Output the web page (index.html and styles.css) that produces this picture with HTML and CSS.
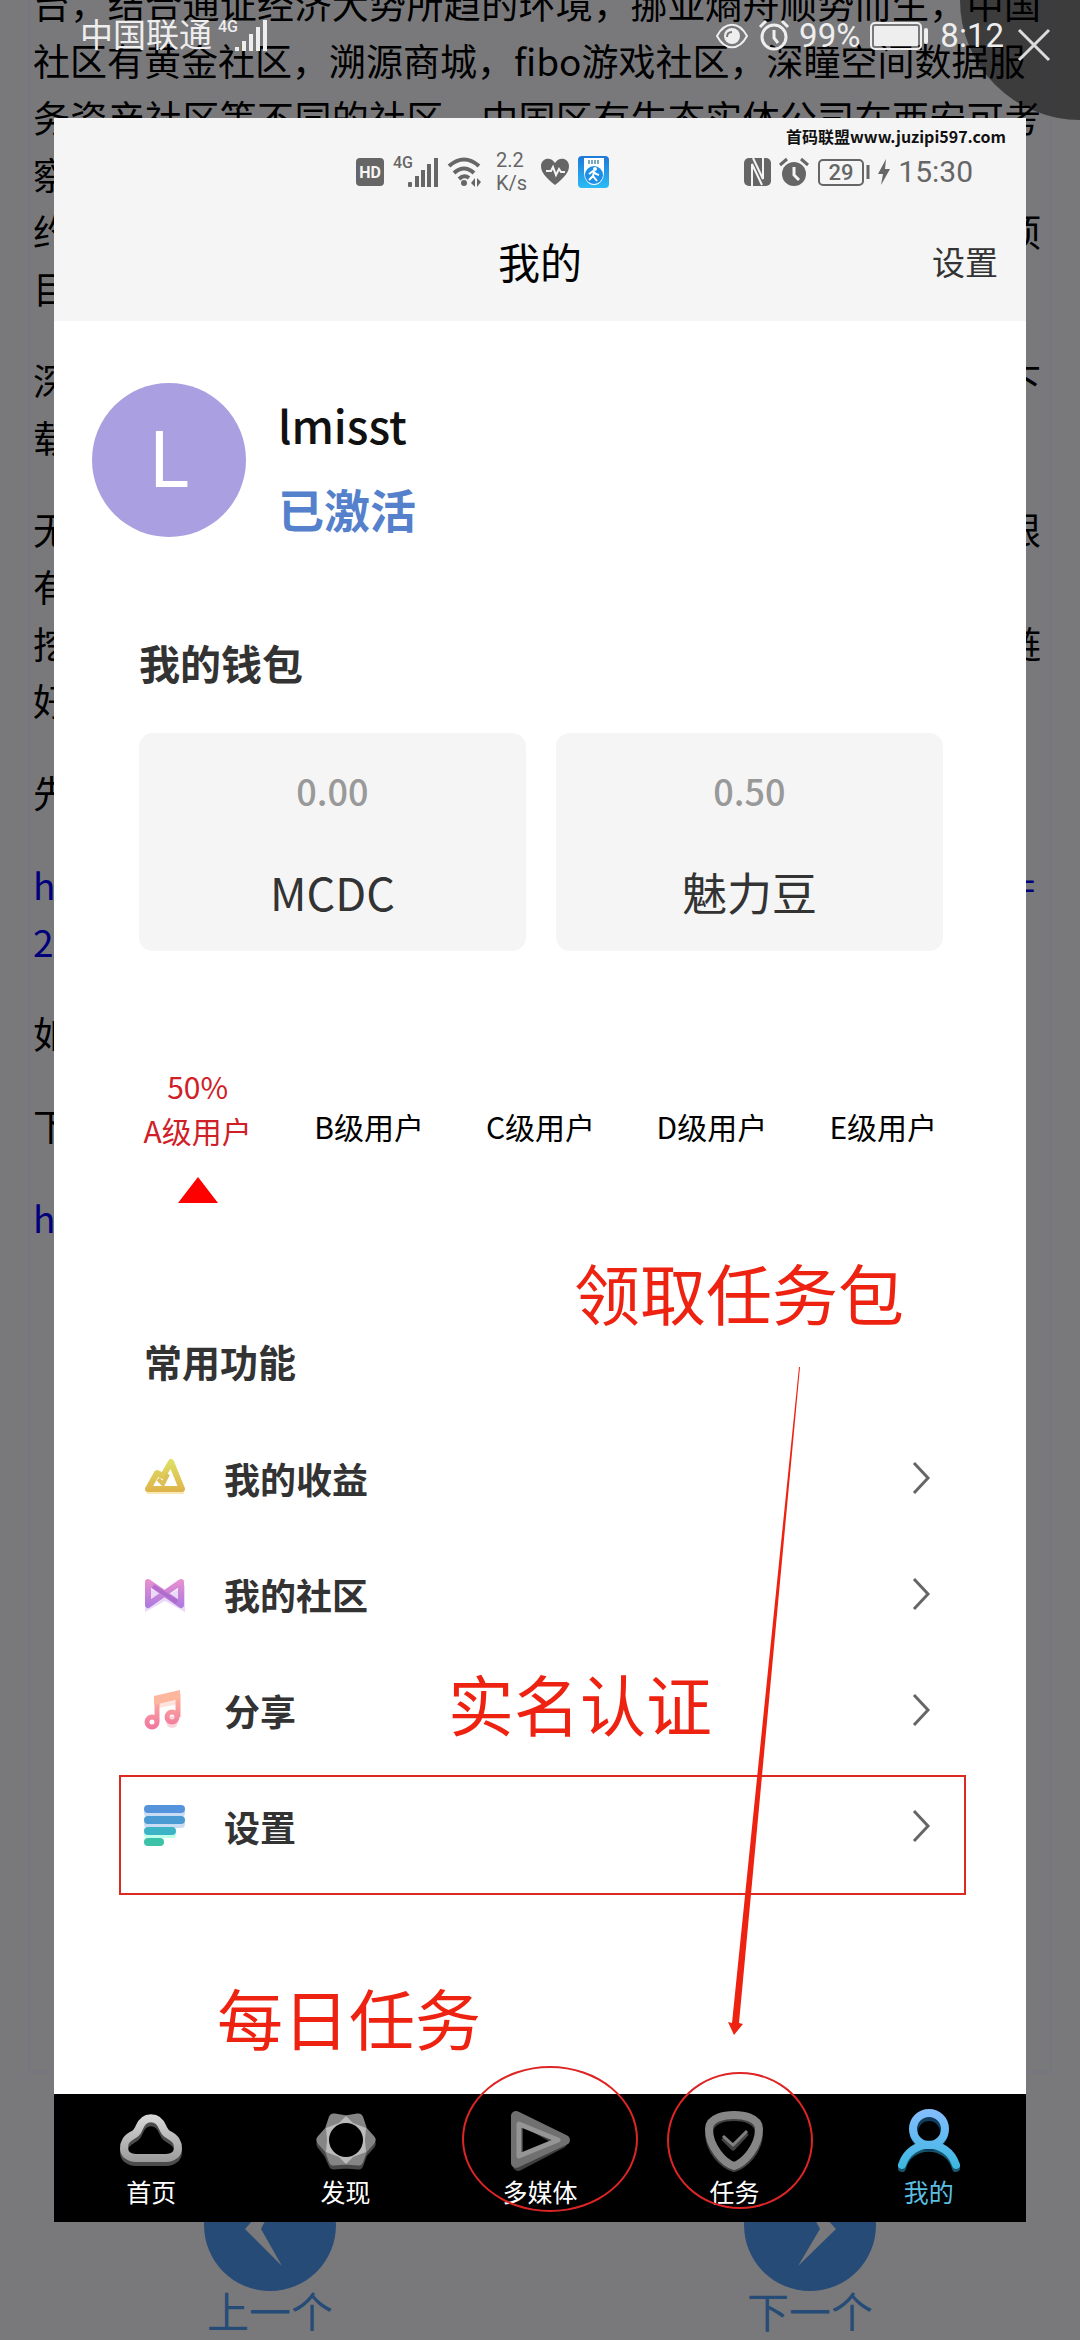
FILE: index.html
```html
<!DOCTYPE html>
<html lang="zh-CN">
<head>
<meta charset="utf-8">
<meta name="viewport" content="width=device-width, initial-scale=1">
<title>我的</title>
<link rel="stylesheet" href="styles.css">
</head>
<body>
<div class="stage">

  <div class="page">
    <article class="article">
      <p><span class="full">台，结合通证经济大势所趋的环境，挪亚熵舟顺势而生，中国</span>社区有黄金社区，溯源商城，fibo游戏社区，深瞳空间数据服<span class="full">务资产社区等不同的社区，中国区有生态实体公司在西安可考</span>察<br><span class="line"><span>约</span><span>项</span></span>目</p>
      <p><span class="line"><span>深</span><span>下</span></span>载</p>
      <p><span class="line"><span>无</span><span>限</span></span>有<br><span class="line"><span>挖</span><span>链</span></span>好</p>
      <p>先</p>
      <p><a class="line wrapped" href="#"><span>ht</span><span>=</span></a><a href="#">2</a></p>
      <p>如</p>
      <p>下</p>
      <p><a href="#">ht</a></p>
    </article>
    <nav class="pager">
      <a href="#">
        <svg viewBox="0 0 132 132" width="132" height="132"><circle cx="66" cy="66" r="66" fill="#274b77"/><path d="M77 30 41 70 78 107 57 70Z" fill="#79797b"/></svg>
        <span>上一个</span>
      </a>
      <a href="#">
        <svg viewBox="0 0 132 132" width="132" height="132"><circle cx="66" cy="66" r="66" fill="#274b77"/><path d="M55 30 92 70 54 107 76 70Z" fill="#79797b"/></svg>
        <span>下一个</span>
      </a>
    </nav>
  </div>

  <div class="viewer">
    <header class="device-bar">
      <div class="carrier">
        <span>中国联通</span>
        <svg viewBox="0 0 52 34" width="52" height="34"><text x="0" y="13" class="net">4G</text><g fill="currentColor"><rect x="17" y="28" width="4" height="4"/><rect x="24" y="22" width="4" height="10"/><rect x="31" y="15" width="4" height="17"/><rect x="38" y="8" width="4" height="24"/><rect x="45" y="1" width="4" height="31"/></g></svg>
      </div>
      <div class="device-status">
        <svg viewBox="0 0 34 28" width="34" height="28" fill="none" stroke="currentColor" stroke-width="2"><path d="M2 14C10-1 24-1 32 14 24 29 10 29 2 14Z"/><circle cx="17" cy="14" r="8" fill="currentColor" stroke="none"/><path d="M12 15Q12 10 17 10" stroke="#79797b" stroke-width="2"/></svg>
        <svg viewBox="0 0 30 32" width="30" height="32" fill="none" stroke="currentColor" stroke-width="3"><circle cx="15" cy="17" r="12"/><path d="M15 10v8l4 5M1 7 7 1M29 7 23 1"/></svg>
        <span>99%</span>
        <svg viewBox="0 0 60 28" width="60" height="28"><rect x="1" y="1" width="50" height="26" rx="4" fill="none" stroke="currentColor" stroke-width="2"/><rect x="4" y="4" width="44" height="20" rx="1" fill="currentColor"/><rect x="54" y="6" width="4" height="16" rx="2" fill="currentColor"/></svg>
        <span>8:12</span>
      </div>
    </header>
    <button class="close" type="button" aria-label="关闭">
      <svg viewBox="0 0 32 32" width="32" height="32" fill="none" stroke="#dcdcdc" stroke-width="3"><path d="M1 1 31 31M31 1 1 31"/></svg>
    </button>

    <main class="sheet">
      <header class="top">
        <div class="watermark">首码联盟www.juzipi597.com</div>
        <div class="status">
          <div class="status-left">
            <svg viewBox="0 0 28 28" width="28" height="28"><rect width="28" height="28" rx="4" fill="#666"/><text x="14" y="20" text-anchor="middle" class="hd">HD</text></svg>
            <svg viewBox="0 0 46 34" width="46" height="34"><text x="0" y="13" class="net">4G</text><g fill="#666"><rect x="15" y="27" width="4" height="5" rx="1"/><rect x="22" y="21" width="4" height="11"/><rect x="28" y="15" width="4" height="17"/><rect x="34" y="9" width="4" height="23"/><rect x="41" y="3" width="4" height="29"/></g></svg>
            <svg viewBox="0 0 34 30" width="34" height="30" fill="none" stroke="#666" stroke-width="4"><path d="M1 9Q16-4 31 9M6 16Q16 7 26 16M11 22Q16 17 21 21"/><circle cx="16" cy="26" r="3" fill="#666" stroke="none"/><path d="M23 26l4-5v9zM33 25l-4-4v9z" fill="#666" stroke="none"/></svg>
            <span class="speed">2.2<br>K/s</span>
            <svg viewBox="0 0 28 26" width="28" height="26"><path d="M14 26C4 18 0 13 0 7 0-1 10-3 14 4 18-3 28-1 28 7 28 13 24 18 14 26Z" fill="#666"/><path d="M5 12h5l2-4 3 8 3-6 2 3h4" fill="none" stroke="#f5f5f5" stroke-width="2"/></svg>
            <svg viewBox="0 0 31 32" width="31" height="32"><defs><linearGradient id="run" x1="0" y1="0" x2="0" y2="1"><stop stop-color="#1f78d8"/><stop offset="1" stop-color="#2bbcf5"/></linearGradient></defs><rect width="31" height="32" rx="4" fill="url(#run)"/><path d="M6 2h20v15a10 12 0 0 1-20 0Z" fill="#fff"/><path d="M10 6h12" stroke="#7ab" stroke-width="4" stroke-dasharray="2 1"/><circle cx="16" cy="19" r="9" fill="#1e8fe6"/><circle cx="17" cy="13" r="2" fill="#fff"/><path d="M11 18l4-3 3 3 3 1M16 16l-1 4 4 5M15 20l-4 4" stroke="#fff" stroke-width="2" fill="none"/></svg>
          </div>
          <div class="status-right">
            <svg viewBox="0 0 27 28" width="27" height="28"><rect width="27" height="28" rx="5" fill="#666"/><path d="M8 28V6L18 27M9 0 19 21V0" fill="none" stroke="#f5f5f5" stroke-width="2"/></svg>
            <svg viewBox="0 0 30 28" width="30" height="28"><circle cx="15" cy="16" r="12" fill="#666"/><path d="M1 7 8 1M29 7 22 1" stroke="#666" stroke-width="3"/><path d="M15 9v8l5 5" fill="none" stroke="#f5f5f5" stroke-width="3"/></svg>
            <svg viewBox="0 0 53 28" width="53" height="28"><rect x="2" y="2" width="44" height="25" rx="4" fill="none" stroke="#666" stroke-width="2"/><text x="24" y="22" text-anchor="middle" class="charge">29</text><path d="M51 7v14" stroke="#666" stroke-width="3"/></svg>
            <svg viewBox="0 0 12 26" width="12" height="26"><path d="M8 0 0 15H5L3 26 12 10H7Z" fill="#666"/></svg>
            <span class="clock">15:30</span>
          </div>
        </div>
        <div class="titlebar">
          <h1>我的</h1>
          <a class="settings-link" href="#">设置</a>
        </div>
      </header>

      <section class="profile">
        <div class="avatar">L</div>
        <div class="who">
          <div class="name">lmisst</div>
          <div class="state">已激活</div>
        </div>
      </section>

      <section class="wallet">
        <h2>我的钱包</h2>
        <div class="cards">
          <div class="card"><span class="amount">0.00</span><span class="coin">MCDC</span></div>
          <div class="card"><span class="amount">0.50</span><span class="coin">魅力豆</span></div>
        </div>
      </section>

      <section class="levels">
        <div class="level current">
          <span>50%</span><span>A级用户</span>
          <svg viewBox="0 0 40 26" width="40" height="26"><path d="M20 0 40 26H0Z" fill="#fe0000"/></svg>
        </div>
        <div class="level">B级用户</div>
        <div class="level">C级用户</div>
        <div class="level">D级用户</div>
        <div class="level">E级用户</div>
      </section>

      <section class="features">
        <h2>常用功能</h2>
        <ul>
          <li><a href="#">
            <svg class="icon" viewBox="0 0 42 42" width="42" height="42"><defs><linearGradient id="gold" gradientUnits="userSpaceOnUse" x1="0" y1="2" x2="0" y2="36"><stop stop-color="#dde266"/><stop offset="1" stop-color="#dfb14a"/></linearGradient></defs><path d="M2 34H40V37H3Z" fill="#f8e9b8"/><path d="M4 32 13 16 19 19 27 5 38 32Z" fill="none" stroke="url(#gold)" stroke-width="6" stroke-linejoin="round"/><path d="M14 22 19 27 24 17" fill="none" stroke="#dcc158" stroke-width="4"/></svg>
            <span>我的收益</span>
            <svg class="chevron" viewBox="0 0 18 32" width="18" height="32"><path d="M2 1 16 16 2 31"/></svg>
          </a></li>
          <li><a href="#">
            <svg class="icon" viewBox="0 0 42 42" width="42" height="42"><defs><linearGradient id="bow" gradientUnits="userSpaceOnUse" x1="0" y1="6" x2="0" y2="36"><stop stop-color="#ea91cf"/><stop offset="1" stop-color="#a878e0"/></linearGradient></defs><path d="M1 12 21 24 41 12V39L21 28 1 39Z" fill="#ead9f7"/><path d="M4 9 37 32V9L4 32Z" fill="none" stroke="url(#bow)" stroke-width="6" stroke-linejoin="round"/><path d="M9 13 33 29" stroke="#a565c8" stroke-width="4" opacity=".7"/></svg>
            <span>我的社区</span>
            <svg class="chevron" viewBox="0 0 18 32" width="18" height="32"><path d="M2 1 16 16 2 31"/></svg>
          </a></li>
          <li><a href="#">
            <svg class="icon" viewBox="0 0 42 42" width="42" height="42"><defs><linearGradient id="note" gradientUnits="userSpaceOnUse" x1="0" y1="0" x2="0" y2="42"><stop stop-color="#ffc39d"/><stop offset="1" stop-color="#f0719f"/></linearGradient></defs><path d="M14 17 35 13" stroke="#fde3dc" stroke-width="4"/><circle cx="28" cy="33" r="6" fill="#fbd5de"/><g fill="none" stroke="url(#note)" stroke-width="5"><circle cx="8" cy="33" r="5"/><circle cx="28" cy="28" r="5"/><path d="M13 33V10M34 28V5"/></g><path d="M10 7 36 1V10L10 16Z" fill="#fdb79e"/></svg>
            <span>分享</span>
            <svg class="chevron" viewBox="0 0 18 32" width="18" height="32"><path d="M2 1 16 16 2 31"/></svg>
          </a></li>
          <li class="marked"><a href="#">
            <svg class="icon" viewBox="0 0 42 42" width="42" height="42"><g opacity=".3"><rect y="4" width="41" height="8" rx="4" fill="#4d8fdb"/><rect y="15" width="41" height="8" rx="4" fill="#4d8fdb"/><rect y="26" width="32" height="7" rx="3" fill="#3fb"/></g><rect y="0" width="41" height="8" rx="4" fill="#5593dd"/><rect y="11" width="41" height="8" rx="4" fill="#4a9bd3"/><rect y="22" width="32" height="8" rx="4" fill="#3db4c6"/><rect y="33" width="20" height="8" rx="4" fill="#3bc2a8"/></svg>
            <span>设置</span>
            <svg class="chevron" viewBox="0 0 18 32" width="18" height="32"><path d="M2 1 16 16 2 31"/></svg>
          </a></li>
        </ul>
      </section>

      <nav class="tabs">
        <a href="#">
          <svg viewBox="0 0 64 64" width="64" height="64"><defs><linearGradient id="metal" gradientUnits="userSpaceOnUse" x1="0" y1="0" x2="0" y2="64"><stop stop-color="#e0e0e0"/><stop offset="1" stop-color="#8c8c8c"/></linearGradient></defs><g fill="none" stroke-width="8" stroke-linejoin="round"><path d="M17 53C2 53 1 36 14 30 18 28 18 27 20 23 25 10 39 10 44 23 46 27 46 28 50 30 63 36 62 53 47 53Z" stroke="#4c4c4c"/><path d="M17 49C2 49 1 32 14 26 18 24 18 23 20 19 25 6 39 6 44 19 46 23 46 24 50 26 63 32 62 49 47 49Z" stroke="url(#metal)"/></g></svg>
          <span>首页</span>
        </a>
        <a href="#">
          <svg viewBox="0 0 64 64" width="64" height="64" stroke-linejoin="round"><path d="M56 35 48 44 44 55 32 54 20 55 15 44 8 35 20 20H44Z" fill="#484848" stroke="#484848" stroke-width="11"/><path d="M56 31 48 40 44 51 32 50 20 51 16 40 8 31 16 22 20 10 32 12 44 10 48 22Z" fill="#858585" stroke="#858585" stroke-width="11"/><path d="M32 7 39 14 52 19 51 31 52 43 39 48 32 55 25 48 12 43 13 31 12 19 25 14Z" fill="#bbb"/><circle cx="32" cy="31" r="17"/></svg>
          <span>发现</span>
        </a>
        <a href="#">
          <svg viewBox="0 0 64 64" width="64" height="64" fill="none" stroke-linejoin="round"><path d="M10 9V57L54 34Z" stroke="#3f3f3f" stroke-width="10"/><path d="M8 7V54L57 31Z" stroke="#707070" stroke-width="10"/><path d="M11 15V47L50 31Z" stroke="#959595" stroke-width="5"/></svg>
          <span>多媒体</span>
        </a>
        <a href="#">
          <svg viewBox="0 0 64 64" width="64" height="64" fill="none" stroke-linejoin="round"><path d="M32 8C40 8 57 10 57 24 57 42 42 56 32 59 22 56 7 42 7 24 7 10 24 8 32 8Z" stroke="#414141" stroke-width="8"/><path d="M32 6C40 6 57 8 57 20 57 38 42 54 32 57 22 54 7 38 7 20 7 8 24 6 32 6Z" stroke="#868686" stroke-width="8"/><path d="M21 29 31 39 45 24" stroke="#444" stroke-width="5"/><path d="M21 27 31 36 45 22" stroke="#808080" stroke-width="3"/></svg>
          <span>任务</span>
        </a>
        <a class="active" href="#">
          <svg viewBox="0 0 64 64" width="64" height="64" fill="none" stroke-width="8" stroke-linecap="round"><defs><linearGradient id="me" gradientUnits="userSpaceOnUse" x1="0" y1="0" x2="0" y2="64"><stop stop-color="#86bdff"/><stop offset="1" stop-color="#35b7dd"/></linearGradient></defs><path d="M5 59C12 32 51 32 59 59" stroke="#16566e"/><circle cx="32" cy="23" r="15" stroke="#123c5c"/><circle cx="32" cy="20" r="16" stroke="url(#me)"/><path d="M5 56C14 29 50 29 59 56" stroke="url(#me)"/></svg>
          <span>我的</span>
        </a>
      </nav>

      <div class="remark remark-pack">领取任务包</div>
      <div class="remark remark-verify">实名认证</div>
      <div class="remark remark-daily">每日任务</div>
      <svg class="pointer" viewBox="0 0 74 670" width="74" height="670"><path d="M70 0H71L10 656 14 657 5 668-1 655 3 656Z" fill="#ee2211"/></svg>
      <div class="ring ring-media"></div>
      <div class="ring ring-task"></div>
    </main>
  </div>
</div>
</body>
</html>
```
FILE: styles.css
```css
* { box-sizing: border-box; }

body {
  margin: 0;
  background: #79797b;
  font-family: "Noto Sans CJK SC", sans-serif;
  color: #000;
}

a { color: inherit; text-decoration: none; }
h1, h2, p, ul { margin: 0; padding: 0; font-weight: 400; }
ul { list-style: none; }
svg { display: block; flex: none; overflow: visible; }

.stage {
  display: grid;
  min-height: 100vh;
  overflow: hidden;
}

/* Article behind the picture viewer */
.page {
  grid-area: 1 / 1;
  display: flex;
  flex-direction: column;
  min-width: 0;
}

.article {
  flex: 1;
  margin: -27px 28px 86px;
  padding: 0 3px;
  border: 2px solid #747780;
  font-size: 37px;
  line-height: 57px;
  white-space: nowrap;
}

.article p { margin-bottom: 35px; }
.article a { color: #00007c; }
.line { display: flex; justify-content: space-between; padding-right: 6px; }
.line.wrapped { padding-right: 12px; }
.full { display: block; white-space: normal; text-align: justify; text-align-last: justify; padding-right: 6px; }

.pager { display: flex; }

.pager a {
  flex: 1;
  display: flex;
  flex-direction: column;
  align-items: center;
  color: #274b77;
  font-size: 42px;
  line-height: 38px;
  padding-bottom: 11px;
}

/* Picture viewer */
.viewer {
  grid-area: 1 / 1;
  position: relative;
  padding: 118px 5%;
}

.device-bar {
  position: absolute;
  z-index: 1;
  inset: 0 0 auto;
  display: flex;
  justify-content: space-between;
  height: 72px;
  padding: 0 76px 0 80px;
  color: #eee;
  font: 33px/36px Roboto, "Noto Sans CJK SC", sans-serif;
}

.carrier, .device-status { display: flex; align-items: center; }
.carrier { gap: 6px; }
.device-status { gap: 10px; }
.net { font: 500 16px Roboto, sans-serif; fill: currentColor; }

.close {
  position: absolute;
  top: 0;
  right: 0;
  width: 120px;
  height: 120px;
  padding: 0 0 30px 28px;
  border: 0;
  border-radius: 0 0 0 120px;
  background: rgba(0, 0, 0, .5);
  display: flex;
  align-items: center;
  justify-content: center;
}

.sheet {
  position: relative;
  background: #fff;
  color: #333;
}

.top { background: #f5f5f5; height: 203px; }

.watermark {
  padding: 7px 20px 0 0;
  text-align: right;
  font-size: 16px;
  font-weight: 700;
  line-height: 22px;
  color: #111;
}

.status {
  display: flex;
  justify-content: space-between;
  align-items: center;
  height: 50px;
  padding: 0 53px 0 302px;
  color: #666;
  font-family: Roboto, sans-serif;
}

.status-left { display: flex; align-items: center; gap: 9px; }
.status-right { display: flex; align-items: center; gap: 8px; }
.speed { font-size: 20px; line-height: 23px; margin: 0 5px; }
.clock { font-size: 30px; line-height: 36px; }
.hd { font: 700 16px Roboto, sans-serif; fill: #f5f5f5; }
.charge { font: 500 22px Roboto, sans-serif; fill: #666; }

.titlebar {
  display: grid;
  grid-template-columns: 1fr auto 1fr;
  align-items: center;
  height: 128px;
  padding: 0 28px;
}

.titlebar h1 {
  grid-column: 2;
  font-size: 42px;
  line-height: 60px;
  color: #000;
}

.settings-link { justify-self: end; font-size: 33px; line-height: 48px; }

.profile {
  display: flex;
  gap: 32px;
  padding: 62px 38px 0;
}

.avatar {
  width: 154px;
  height: 154px;
  border-radius: 50%;
  background: #aa9fe1;
  color: #fff;
  font-size: 76px;
  line-height: 142px;
  text-align: center;
}

.who { font-weight: 700; }
.name { font-size: 45px; font-weight: 500; line-height: 84px; color: #111; }
.state { font-size: 46px; line-height: 82px; color: #5580cc; }

.wallet { padding: 83px 83px 0 85px; }
h2 { font-weight: 700; }
.wallet h2 { font-size: 41px; line-height: 60px; }

.cards {
  display: grid;
  grid-template-columns: 1fr 1fr;
  gap: 30px;
  padding-top: 41px;
}

.card {
  display: flex;
  flex-direction: column;
  align-items: center;
  height: 218px;
  padding-top: 27px;
  border-radius: 14px;
  background: #f5f5f5;
}

.amount { font-size: 36px; font-weight: 500; line-height: 60px; color: #999; }
.coin { font-size: 45px; line-height: 60px; margin-top: 42px; }

.levels {
  display: grid;
  grid-template-columns: repeat(5, 1fr);
  padding: 113px 57px 0 58px;
  color: #000;
  font-size: 30px;
  line-height: 44px;
}

.level { padding-top: 40px; text-align: center; }

.level.current {
  display: flex;
  flex-direction: column;
  align-items: center;
  padding-top: 0;
  color: #cf2027;
}

.level svg { margin-top: 25px; }

.features { padding: 130px 86px 0 90px; }
.features h2 { font-size: 38px; line-height: 56px; }
.features ul { padding: 31px 0 210px; }

.features li a {
  display: grid;
  grid-template-columns: 42px 1fr auto;
  column-gap: 38px;
  align-items: center;
  height: 116px;
  font-size: 36px;
  font-weight: 700;
}

.icon { width: 42px; height: 42px; }
.chevron { fill: none; stroke: #666; stroke-width: 3; margin-right: 10px; }

.marked { position: relative; }

.marked::after {
  content: "";
  position: absolute;
  inset: 7px -26px -11px -25px;
  border: 2px solid #dc2a23;
}

.tabs {
  display: grid;
  grid-template-columns: repeat(5, 1fr);
  height: 128px;
  background: #000;
  color: #fff;
  font-size: 25px;
  line-height: 36px;
}

.tabs a { display: flex; flex-direction: column; align-items: center; padding-top: 15px; }
.tabs .active { color: #5cbfe0; }

/* Hand-drawn marks over the screen */
.remark {
  position: absolute;
  font-size: 66px;
  line-height: 80px;
  color: #ee2211;
}

.remark-pack { right: 122px; top: 1133px; }
.remark-verify { left: 394px; top: 1544px; }
.remark-daily { left: 163px; top: 1858px; }
.pointer { position: absolute; left: 675px; top: 1249px; }
.ring { position: absolute; border: 2px solid #dd2525; border-radius: 50%; }
.ring-media { left: 408px; bottom: 10px; width: 176px; height: 146px; }
.ring-task { left: 613px; bottom: 13px; width: 146px; height: 137px; }
```
